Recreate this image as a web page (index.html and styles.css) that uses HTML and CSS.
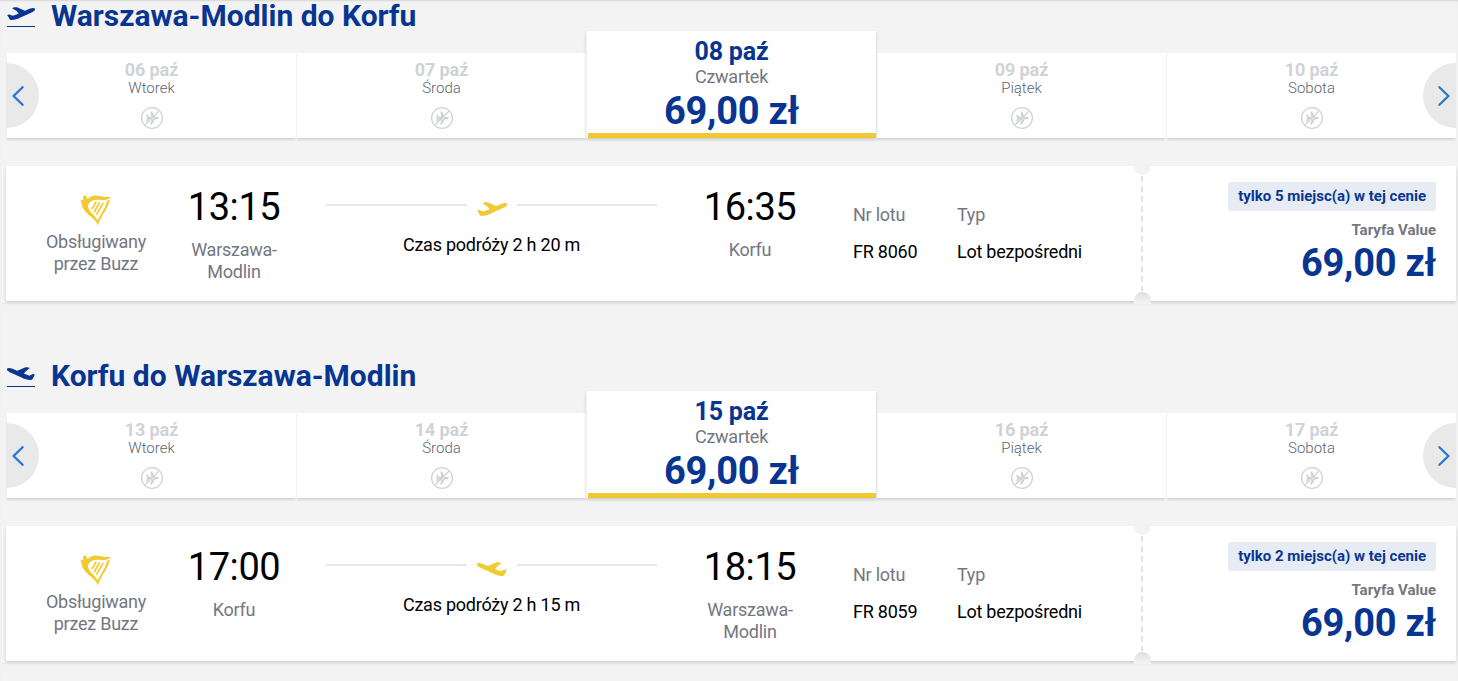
FILE: index.html
```html
<!DOCTYPE html>
<html lang="pl">
<head>
    <meta charset="utf-8">
    <title>Wybierz lot</title>
    <link rel="stylesheet" href="styles.css">
</head>
<body>
    <svg class="sprite" width="0" height="0">
        <symbol id="takeoff" viewBox="0 0 30 15">
            <path d="M0.2 8.8 C1.2 7.9 2.6 8 3.6 8.5 L6.4 9.5 L12.6 7.3 L10.4 4.4 L5.5 1.4 C7.2 0 9.8 0 11.4 0.5 L19.2 3.9 L24.8 1.7 C27.4 0.7 29.4 0.9 30 2 C30.4 3.5 29 4.6 27 5.5 L15 11 C11 12.9 7.5 14.2 4.2 14 C2.6 13.9 2.8 12 0.2 8.8 Z"/>
        </symbol>
        <symbol id="landing" viewBox="0 0 30 15">
            <path transform="matrix(-1 0 0 1 30 0)" d="M0.2 8.1 C1.2 7.2 2.6 7.3 3.6 8 L6 9.3 L12 7 L9.8 4.6 L5.6 1.2 C7.2 0.2 9.8 0.2 11.4 0.7 L19 4 L24.8 1.7 C27.4 0.7 29.4 0.9 30 2 C30.4 3.5 29 4.6 27 5.5 L15 11 C11 12.9 7.5 14.2 4.2 14 C2.6 13.9 2.2 12 0.2 8.1 Z"/>
        </symbol>
        <symbol id="no-flight" viewBox="0 0 24 24">
            <circle cx="12" cy="12" r="10.4" fill="none" stroke="currentColor" stroke-width="1.3"/>
            <path d="M6.2 8.6 L7.4 8.6 L9 10.8 L11.4 10.8 L10.2 5.6 L12 5.6 L14.9 10.8 L17 10.8 C19.4 11 19.4 13 17 13.2 L14.9 13.2 L12 18.4 L10.2 18.4 L11.4 13.2 L9 13.2 L7.4 15.4 L6.2 15.4 L7 12 Z" fill="currentColor"/>
            <path d="M5.4 19.9 L20 5.3" stroke="#fff" stroke-width="0.8"/>
            <path d="M4.7 19.3 L19.3 4.7" stroke="currentColor" stroke-width="1.3"/>
        </symbol>
        <symbol id="harp" viewBox="0 0 32 32">
            <path d="M3.2 2.8 C3.8 0.9 6.8 1 6.8 3.2 C6.8 4 6.4 4.4 6.6 4.8 C9.5 4.6 11 1.8 15 1.6 C20 1.4 23.5 4 31 2.8 C29 5.8 25 6.6 21 6 C16.5 5.2 13 5.6 10.2 8 C7.8 10.2 7.4 12.6 9 15.4 C11 19 15.4 21.4 17.7 26.4 C19.6 21.5 25.3 15 27.2 6.6 L29.8 5.8 C28.2 15.5 20.2 22 18.1 31.8 C16.4 26.3 12 24 7.8 20 C3.8 16.2 1.8 12.4 1.4 9.2 L0.6 6.2 L3.4 6 C3.2 5 2.8 4 3.2 2.8 Z"/>
            <path d="M16 8 L12 15.2 M19.6 8.2 L14.2 18.2 M23.2 8.6 L16.4 20.6" fill="none" stroke="currentColor" stroke-width="1.7"/>
        </symbol>
    </svg>

    <div class="journey">
        <h2 class="title">
            <span class="title-icon"><svg><use href="#takeoff"/></svg></span>
            Warszawa-Modlin do Korfu
        </h2>
        <div class="carousel">
            <button class="arrow arrow-prev"><svg viewBox="0 0 12 20"><path d="M10.6 1.2 L1.6 10 L10.6 18.8"/></svg></button>
            <div class="day">
                <div class="date">06 paź</div>
                <div class="weekday">Wtorek</div>
                <svg class="no-flight"><use href="#no-flight"/></svg>
            </div>
            <div class="day">
                <div class="date">07 paź</div>
                <div class="weekday">Środa</div>
                <svg class="no-flight"><use href="#no-flight"/></svg>
            </div>
            <div class="day selected">
                <div class="date">08 paź</div>
                <div class="weekday">Czwartek</div>
                <div class="price">69,00 zł</div>
            </div>
            <div class="day">
                <div class="date">09 paź</div>
                <div class="weekday">Piątek</div>
                <svg class="no-flight"><use href="#no-flight"/></svg>
            </div>
            <div class="day">
                <div class="date">10 paź</div>
                <div class="weekday">Sobota</div>
                <svg class="no-flight"><use href="#no-flight"/></svg>
            </div>
            <button class="arrow arrow-next"><svg viewBox="0 0 12 20"><path d="M1.4 1.2 L10.4 10 L1.4 18.8"/></svg></button>
        </div>
        <div class="flight">
            <div class="operator">
                <svg class="harp"><use href="#harp"/></svg>
                <div>Obsługiwany przez Buzz</div>
            </div>
            <div class="stop">
                <div class="time">13:15</div>
                <div class="city">Warszawa-Modlin</div>
            </div>
            <div class="route">
                <div class="route-line"><svg><use href="#takeoff"/></svg></div>
                <div class="duration">Czas podróży 2 h 20 m</div>
            </div>
            <div class="stop stop-end">
                <div class="time">16:35</div>
                <div class="city">Korfu</div>
            </div>
            <div class="info number">
                <div class="label">Nr lotu</div>
                <div>FR 8060</div>
            </div>
            <div class="info">
                <div class="label">Typ</div>
                <div>Lot bezpośredni</div>
            </div>
            <div class="divider"></div>
            <div class="fare">
                <div class="badge">tylko 5 miejsc(a) w tej cenie</div>
                <div class="fare-name">Taryfa Value</div>
                <div class="price">69,00 zł</div>
            </div>
        </div>
    </div>

    <div class="journey">
        <h2 class="title">
            <span class="title-icon"><svg><use href="#landing"/></svg></span>
            Korfu do Warszawa-Modlin
        </h2>
        <div class="carousel">
            <button class="arrow arrow-prev"><svg viewBox="0 0 12 20"><path d="M10.6 1.2 L1.6 10 L10.6 18.8"/></svg></button>
            <div class="day">
                <div class="date">13 paź</div>
                <div class="weekday">Wtorek</div>
                <svg class="no-flight"><use href="#no-flight"/></svg>
            </div>
            <div class="day">
                <div class="date">14 paź</div>
                <div class="weekday">Środa</div>
                <svg class="no-flight"><use href="#no-flight"/></svg>
            </div>
            <div class="day selected">
                <div class="date">15 paź</div>
                <div class="weekday">Czwartek</div>
                <div class="price">69,00 zł</div>
            </div>
            <div class="day">
                <div class="date">16 paź</div>
                <div class="weekday">Piątek</div>
                <svg class="no-flight"><use href="#no-flight"/></svg>
            </div>
            <div class="day">
                <div class="date">17 paź</div>
                <div class="weekday">Sobota</div>
                <svg class="no-flight"><use href="#no-flight"/></svg>
            </div>
            <button class="arrow arrow-next"><svg viewBox="0 0 12 20"><path d="M1.4 1.2 L10.4 10 L1.4 18.8"/></svg></button>
        </div>
        <div class="flight">
            <div class="operator">
                <svg class="harp"><use href="#harp"/></svg>
                <div>Obsługiwany przez Buzz</div>
            </div>
            <div class="stop">
                <div class="time">17:00</div>
                <div class="city">Korfu</div>
            </div>
            <div class="route">
                <div class="route-line"><svg><use href="#landing"/></svg></div>
                <div class="duration">Czas podróży 2 h 15 m</div>
            </div>
            <div class="stop stop-end">
                <div class="time">18:15</div>
                <div class="city">Warszawa-Modlin</div>
            </div>
            <div class="info number">
                <div class="label">Nr lotu</div>
                <div>FR 8059</div>
            </div>
            <div class="info">
                <div class="label">Typ</div>
                <div>Lot bezpośredni</div>
            </div>
            <div class="divider"></div>
            <div class="fare">
                <div class="badge">tylko 2 miejsc(a) w tej cenie</div>
                <div class="fare-name">Taryfa Value</div>
                <div class="price">69,00 zł</div>
            </div>
        </div>
    </div>
</body>
</html>
```
FILE: styles.css
```css
* {
    box-sizing: border-box;
}

body {
    margin: 0;
    height: 681px;
    padding: 0 2px 0 6px;
    background: #f3f3f3;
    box-shadow: inset 0 2px 2px -1px #d4d4d4;
    font-family: Roboto, "Liberation Sans", sans-serif;
    font-size: 18px;
    line-height: 22px;
    letter-spacing: -0.24px;
    color: #000;
}

.sprite {
    position: absolute;
}

.journey + .journey {
    margin-top: 59px;
}

.title {
    display: flex;
    align-items: center;
    gap: 16px;
    margin: 0;
    height: 31px;
    font-size: 30px;
    line-height: 31px;
    font-weight: 700;
    letter-spacing: 0;
    color: #073590;
}

.title-icon {
    width: 28px;
    height: 20px;
    margin: 3px 0 0 1px;
    border-bottom: 1px solid #073590;
}

.title-icon svg {
    display: block;
    width: 28px;
    height: 14px;
    fill: #073590;
}

.carousel {
    position: relative;
    display: flex;
    align-items: flex-end;
    height: 107px;
}

.day {
    flex: 1;
    height: 85px;
    padding-top: 7px;
    background: #fff;
    border-left: 1px solid #f1f1f1;
    box-shadow: 0 3px 2px -1px rgba(0, 0, 0, 0.13);
    text-align: center;
}

.day .date {
    font-weight: 700;
    line-height: 19px;
    letter-spacing: -0.1px;
    color: #d0d3d6;
}

.day .weekday {
    font-size: 15px;
    font-weight: 300;
    line-height: 18px;
    letter-spacing: 0;
    color: #5e6470;
}

.no-flight {
    display: block;
    width: 24px;
    height: 24px;
    margin: 9px auto 0;
    color: #d0d3d6;
}

.price {
    font-size: 38px;
    font-weight: 700;
    line-height: 47px;
    color: #073590;
}

.selected {
    position: relative;
    height: 107px;
    box-shadow: 0 2px 3px rgba(0, 0, 0, 0.16);
}

.selected::after {
    content: "";
    position: absolute;
    left: 1px;
    right: 0;
    bottom: 0;
    height: 5px;
    background: #f1c933;
}

.selected .date {
    font-size: 25px;
    line-height: 28px;
    letter-spacing: -0.2px;
    color: #073590;
}

.selected .weekday {
    font-size: 18px;
    font-weight: 400;
    line-height: 22px;
    letter-spacing: -0.24px;
    color: #737783;
}

.arrow {
    position: absolute;
    top: 32px;
    z-index: 1;
    display: flex;
    align-items: center;
    width: 33px;
    height: 65px;
    padding: 0;
    border: none;
    background: #e9e9e9;
}

.arrow-prev {
    left: 0;
    padding-left: 6px;
    border-radius: 0 33px 33px 0;
}

.arrow-next {
    right: 0;
    padding-left: 15px;
    border-radius: 33px 0 0 33px;
}

.arrow svg {
    width: 12px;
    height: 20px;
    fill: none;
    stroke: #2777d0;
    stroke-width: 2.3;
    stroke-linecap: round;
}

.flight {
    display: flex;
    height: 135px;
    margin-top: 28px;
    padding: 0 20px 0 30px;
    background: #fff;
    box-shadow: 0 2px 3px rgba(0, 0, 0, 0.15);
    text-align: center;
}

.operator {
    width: 120px;
    padding: 28px 8px 0;
    color: #737783;
}

.harp {
    display: block;
    width: 32px;
    height: 32px;
    margin: 0 auto 5px;
    fill: #f1c933;
    color: #f1c933;
}

.stop {
    width: 110px;
    margin-left: 23px;
    padding-top: 19px;
}

.stop-end {
    margin-left: 38px;
}

.time {
    font-size: 38px;
    line-height: 45px;
    letter-spacing: -0.4px;
}

.city {
    width: 90px;
    margin: 9px auto 0;
    color: #737783;
}

.route {
    width: 331px;
    margin-left: 37px;
    padding-top: 28px;
}

.route-line {
    display: flex;
    align-items: center;
    gap: 10px;
}

.route-line::before,
.route-line::after {
    content: "";
    flex: 1;
    height: 2px;
    margin-bottom: 1px;
    background: #e8e8e8;
}

.route-line svg {
    width: 30px;
    height: 15px;
    margin-top: 8px;
    fill: #f1c933;
}

.duration {
    margin-top: 17px;
}

.info {
    width: 130px;
    padding-top: 38px;
    text-align: left;
}

.number {
    width: 104px;
    margin-left: 48px;
}

.label {
    margin-bottom: 15px;
    color: #737783;
}

.divider {
    position: relative;
    width: 17px;
    margin-left: 47px;
    background: repeating-linear-gradient(#e4e4e4 0 6px, #fff 6px 10px) 7px 10px / 2px 115px no-repeat;
}

.divider::before,
.divider::after {
    content: "";
    position: absolute;
    left: 0;
    width: 17px;
    background: #f3f3f3;
}

.divider::before {
    top: 0;
    height: 9px;
    border-radius: 0 0 9px 9px;
}

.divider::after {
    bottom: -3px;
    height: 12px;
    border-radius: 9px 9px 0 0;
    background: linear-gradient(#dfdfdf, #f3f3f3);
}

.fare {
    flex: 1;
    padding-top: 16px;
    text-align: right;
}

.badge {
    display: inline-block;
    padding: 0 10px;
    border-radius: 2px;
    background: #e6ebf4;
    font-size: 15px;
    font-weight: 700;
    line-height: 29px;
    letter-spacing: 0;
    color: #073590;
}

.fare-name {
    margin-top: 9px;
    font-size: 15px;
    font-weight: 700;
    line-height: 20px;
    letter-spacing: 0;
    color: #737783;
}
```
